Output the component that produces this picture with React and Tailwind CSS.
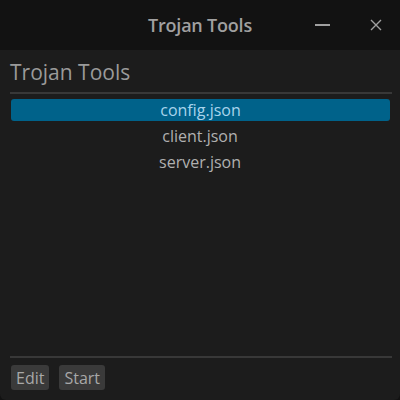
export default function App() {
  return (
    <div className="w-[400px] h-[400px] flex flex-col bg-[#121212] overflow-hidden" style={{ fontFamily: '"Open Sans", "Noto Sans", sans-serif' }}>
      <div className="h-[50px] relative flex items-center justify-center shrink-0">
        <span className="text-[18px] font-semibold text-[#a0a0a0] tracking-[-0.2px]">Trojan Tools</span>
        <div className="absolute left-[315px] top-[24px] w-[15px] h-[2px] bg-[#a0a0a0]" />
        <svg className="absolute left-[369px] top-[18px]" width="14" height="14" viewBox="0 0 14 14">
          <path d="M2 2L12 12M12 2L2 12" stroke="#a0a0a0" strokeWidth="1.4" />
        </svg>
      </div>
      <div className="flex-1 bg-[#1c1c1c] flex flex-col px-[10px] rounded-b-[6px]">
        <div className="pt-[7px] h-[42px] text-[21px] text-[#9a9a9a] leading-[30px]">Trojan Tools</div>
        <div className="h-[2px] bg-[#383838] mr-[-2px]" />
        <div className="mt-[5px] flex flex-col text-[16px]">
          <div className="h-[22px] rounded-[3px] bg-[#00628a] text-[#a8d4ec] flex items-center justify-center ml-px">config.json</div>
          <div className="h-[26px] flex items-center justify-center text-[#b0b0b0] mt-[2px]">client.json</div>
          <div className="h-[26px] flex items-center justify-center text-[#b0b0b0]">server.json</div>
        </div>
        <div className="flex-1" />
        <div className="h-[2px] bg-[#383838] mr-[-2px]" />
        <div className="flex gap-[10px] pt-[7px] pb-[10px] pl-px">
          <div className="h-[25px] px-[5px] rounded-[3px] bg-[#3a3a3a] text-[#a8a8a8] text-[16px] flex items-center">Edit</div>
          <div className="h-[25px] px-[5px] rounded-[3px] bg-[#3a3a3a] text-[#a8a8a8] text-[16px] flex items-center">Start</div>
        </div>
      </div>
    </div>
  );
}
